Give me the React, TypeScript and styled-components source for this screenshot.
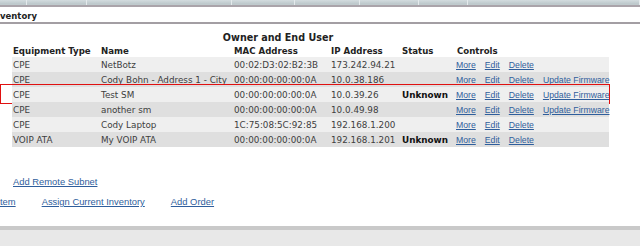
import * as React from "react";
import styled, { createGlobalStyle } from "styled-components";

const GlobalStyles = createGlobalStyle`
  html, body {
    margin: 0;
    padding: 0;
    background: #ffffff;
    overflow: hidden;
  }
  * { box-sizing: border-box; }
`;

const Page = styled.div`
  display: flex;
  flex-direction: column;
  width: 640px;
  height: 246px;
  overflow: hidden;
  font-family: "DejaVu Sans", Verdana, sans-serif;
  color: #333333;
`;

const TabStrip = styled.div`
  display: flex;
  height: 7px;
  flex-shrink: 0;
  background: linear-gradient(#d3dcdf, #bfcacd 70%);
  border-bottom: 2px solid #aaa4aa;
`;

const Tab = styled.div<{ $w?: number }>`
  width: ${p => (p.$w ? `${p.$w}px` : "auto")};
  flex: ${p => (p.$w ? "0 0 auto" : "1")};
  border-right: 1px solid #e4eaec;
`;

const SectionHeader = styled.div`
  height: 17px;
  flex-shrink: 0;
  padding-top: 4px;
  font-size: 8.5px;
  font-weight: bold;
  color: #222222;
  line-height: 10px;
  white-space: nowrap;
  border-bottom: 2px solid #a39ea3;
`;

const Content = styled.div`
  flex: 1;
  display: flex;
  flex-direction: column;
`;

const Title = styled.div`
  width: 556px;
  margin-top: 8px;
  height: 12px;
  line-height: 12px;
  text-align: center;
  font-size: 9.6px;
  font-weight: bold;
  color: #222222;
`;

const Grid = styled.div`
  position: relative;
  margin-left: 12px;
  width: 597px;
`;

const Row = styled.div<{ $shade?: "head" | "light" | "dark"; $h?: number }>`
  display: grid;
  grid-template-columns: 88px 133px 97px 71px 55px 1fr;
  align-items: center;
  height: ${p => p.$h ?? 15}px;
  background: ${p =>
    p.$shade === "dark" ? "#dfdfdf" : p.$shade === "light" ? "#efefef" : "transparent"};
  position: relative;
`;

const Highlight = styled.div`
  position: absolute;
  left: -12px;
  right: -1px;
  top: -3px;
  bottom: -2px;
  border: 1.5px solid #e01010;
  pointer-events: none;
`;

const HeadCell = styled.div`
  padding-left: 1px;
  font-size: 8.6px;
  font-weight: bold;
  color: #222222;
  white-space: nowrap;
`;

const Cell = styled.div<{ $bold?: boolean }>`
  padding-left: 1px;
  font-size: 8.8px;
  white-space: nowrap;
  overflow: hidden;
  font-weight: ${p => (p.$bold ? "bold" : "normal")};
  color: ${p => (p.$bold ? "#111111" : "#404040")};
`;

const Controls = styled.div`
  display: flex;
  gap: 9px;
  padding-left: 0;
`;

const Link = styled.a<{ $big?: boolean }>`
  font-family: "Liberation Sans", Arial, sans-serif;
  font-size: ${p => (p.$big ? 9.4 : 8.7)}px;
  color: #2f5e9c;
  text-decoration: underline;
  white-space: nowrap;
  cursor: pointer;
`;

const SubnetLine = styled.div`
  margin-top: 27px;
  margin-left: 13px;
  height: 12px;
  line-height: 12px;
`;

const ActionLinks = styled.div`
  display: flex;
  gap: 26px;
  margin-top: 10px;
  height: 12px;
  line-height: 12px;
`;

const Footer = styled.div`
  height: 20px;
  flex-shrink: 0;
  border-top: 4px solid #c9c9c9;
  background: #e8e8e8;
`;

type Item = {
  type: string;
  name: string;
  mac: string;
  ip: string;
  status?: string;
  firmware?: boolean;
  marked?: boolean;
};

const items: Item[] = [
  { type: "CPE", name: "NetBotz", mac: "00:02:D3:02:B2:3B", ip: "173.242.94.21" },
  { type: "CPE", name: "Cody Bohn - Address 1 - City", mac: "00:00:00:00:00:0A", ip: "10.0.38.186", firmware: true },
  { type: "CPE", name: "Test SM", mac: "00:00:00:00:00:0A", ip: "10.0.39.26", status: "Unknown", firmware: true, marked: true },
  { type: "CPE", name: "another sm", mac: "00:00:00:00:00:0A", ip: "10.0.49.98", firmware: true },
  { type: "CPE", name: "Cody Laptop", mac: "1C:75:08:5C:92:85", ip: "192.168.1.200" },
  { type: "VOIP ATA", name: "My VOIP ATA", mac: "00:00:00:00:00:0A", ip: "192.168.1.201", status: "Unknown" },
];

const tabWidths = [27, 60, 145, 63, 65, 59, 49];

export const App = () => {
  return (
    <Page>
      <GlobalStyles />
      <TabStrip>
        {tabWidths.map((w, i) => (
          <Tab key={i} $w={w} />
        ))}
        <Tab />
      </TabStrip>
      <SectionHeader>ventory</SectionHeader>
      <Content>
        <Title>Owner and End User</Title>
        <Grid>
          <Row $h={13}>
            <HeadCell>Equipment Type</HeadCell>
            <HeadCell>Name</HeadCell>
            <HeadCell>MAC Address</HeadCell>
            <HeadCell>IP Address</HeadCell>
            <HeadCell>Status</HeadCell>
            <HeadCell>Controls</HeadCell>
          </Row>
          {items.map((it, i) => (
            <Row key={i} $shade={i % 2 === 0 ? "light" : "dark"}>
              <Cell>{it.type}</Cell>
              <Cell>{it.name}</Cell>
              <Cell>{it.mac}</Cell>
              <Cell>{it.ip}</Cell>
              <Cell $bold>{it.status ?? ""}</Cell>
              <Controls>
                <Link>More</Link>
                <Link>Edit</Link>
                <Link>Delete</Link>
                {it.firmware && <Link>Update Firmware</Link>}
              </Controls>
              {it.marked && <Highlight />}
            </Row>
          ))}
        </Grid>
        <SubnetLine>
          <Link $big>Add Remote Subnet</Link>
        </SubnetLine>
        <ActionLinks>
          <Link $big>tem</Link>
          <Link $big>Assign Current Inventory</Link>
          <Link $big>Add Order</Link>
        </ActionLinks>
      </Content>
      <Footer />
    </Page>
  );
};

export default App;
